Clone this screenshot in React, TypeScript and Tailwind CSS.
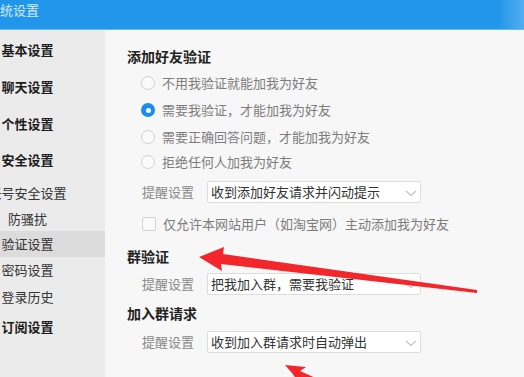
const FONT = "font-['Noto_Sans_CJK_SC','Noto_Sans',sans-serif]"

const navItems: { label: string; h: string; kind: 'head' | 'sub'; active?: boolean }[] = [
  { label: '基本设置', h: 'h-[36px]', kind: 'head' },
  { label: '聊天设置', h: 'h-[38px]', kind: 'head' },
  { label: '个性设置', h: 'h-[35px]', kind: 'head' },
  { label: '安全设置', h: 'h-[38px]', kind: 'head' },
  { label: '帐号安全设置', h: 'h-[28px]', kind: 'sub' },
  { label: '防骚扰', h: 'h-[24px]', kind: 'sub' },
  { label: '验证设置', h: 'h-[26px]', kind: 'sub', active: true },
  { label: '密码设置', h: 'h-[26px]', kind: 'sub' },
  { label: '登录历史', h: 'h-[28px]', kind: 'sub' },
  { label: '订阅设置', h: 'h-[32px]', kind: 'head' },
]

const radios = [
  { label: '不用我验证就能加我为好友', h: 'h-[26px]' },
  { label: '需要我验证，才能加我为好友', h: 'h-[28px]', checked: true },
  { label: '需要正确回答问题，才能加我为好友', h: 'h-[26px]' },
  { label: '拒绝任何人加我为好友', h: 'h-[24px]' },
]

function Chevron() {
  return (
    <svg width="12" height="7" viewBox="0 0 12 7" className="absolute right-[3px] top-[8px]">
      <path d="M1 1 L6 5.5 L11 1" fill="none" stroke="#c4c4c4" strokeWidth="1.2" />
    </svg>
  )
}

function SelectRow({ value, className }: { value: string; className?: string }) {
  return (
    <div className={`flex h-[22px] items-center ${className ?? ''}`}>
      <span className="w-[80px] shrink-0 pl-[15px] text-[13px] leading-[22px] whitespace-nowrap text-[#8a8a8a]">
        提醒设置
      </span>
      <div className="relative h-[22px] w-[214px] shrink-0 rounded-[2px] border border-[#dcdcdc] bg-white">
        <span className="block pl-[3px] text-[13px] leading-[20px] whitespace-nowrap text-[#333]">{value}</span>
        <Chevron />
      </div>
    </div>
  )
}

export default function App() {
  return (
    <div className={`relative h-[377px] w-[524px] overflow-hidden bg-[#f7f7f7] ${FONT}`}>
      {/* Title bar */}
      <div className="flex h-[29px] bg-[linear-gradient(90deg,#2196ea_0%,#2196ea_95%,#52aef0_100%)] pt-[2px]">
        <span className="-ml-[13px] text-[13px] leading-[16px] whitespace-nowrap text-white/80">系统设置</span>
      </div>
      <div className="h-px bg-[#6cb9f1]" />

      <div className="flex h-[347px]">
        {/* Sidebar */}
        <div className="w-[105px] shrink-0 bg-[#ebebeb] pt-[2px]">
          {navItems.map((item) => (
            <div
              key={item.label}
              className={`flex items-center ${item.h} ${item.active ? 'bg-[#dcdcdc]' : ''}`}
            >
              <div className="flex w-[55px] justify-center">
                <span
                  className={`shrink-0 text-[13px] leading-[18px] whitespace-nowrap ${
                    item.kind === 'head' ? 'font-bold text-[#1c1c1c]' : 'text-[#333]'
                  }`}
                >
                  {item.label}
                </span>
              </div>
            </div>
          ))}
        </div>

        {/* Content */}
        <div className="flex-1 pl-[22px] pt-[16px]">
          <h3 className="h-[20px] text-[14px] font-bold leading-[20px] text-[#222]">添加好友验证</h3>

          <div className="mt-[4px]">
            {radios.map((r) => (
              <div key={r.label} className={`flex items-center ${r.h} pl-[14px]`}>
                {r.checked ? (
                  <span className="flex h-[14px] w-[14px] items-center justify-center rounded-full bg-[#1a8cf0]">
                    <span className="h-[5px] w-[5px] rounded-full bg-white" />
                  </span>
                ) : (
                  <span className="h-[14px] w-[14px] rounded-full border border-[#d2d2d2] bg-[#fafafa]" />
                )}
                <span className="ml-[7px] text-[13px] leading-[18px] whitespace-nowrap text-[#7d7d7d]">{r.label}</span>
              </div>
            ))}
          </div>

          <SelectRow value="收到添加好友请求并闪动提示" className="mt-[7px]" />

          <div className="mt-[11px] flex h-[20px] items-center pl-[15px]">
            <span className="h-[14px] w-[14px] rounded-[2px] border border-[#d2d2d2] bg-[#fafafa]" />
            <span className="ml-[7px] text-[13px] leading-[18px] whitespace-nowrap text-[#7d7d7d]">
              仅允许本网站用户（如淘宝网）主动添加我为好友
            </span>
          </div>

          <h3 className="mt-[12px] h-[20px] text-[14px] font-bold leading-[20px] text-[#222]">群验证</h3>
          <SelectRow value="把我加入群，需要我验证" className="mt-[7px]" />

          <h3 className="mt-[8px] h-[20px] text-[14px] font-bold leading-[20px] text-[#222]">加入群请求</h3>
          <SelectRow value="收到加入群请求时自动弹出" className="mt-[8px]" />
        </div>
      </div>

      {/* Red annotation arrows */}
      <svg className="pointer-events-none absolute left-0 top-0" width="524" height="377" viewBox="0 0 524 377">
        <polygon
          points="199,257 224,247 223,254 477,290 477,293 221,264 222,271"
          fill="#f2262b"
        />
        <polygon
          points="285,365 306,367 300,371 320,380 297,380 292,373"
          fill="#f2262b"
        />
      </svg>
    </div>
  )
}
